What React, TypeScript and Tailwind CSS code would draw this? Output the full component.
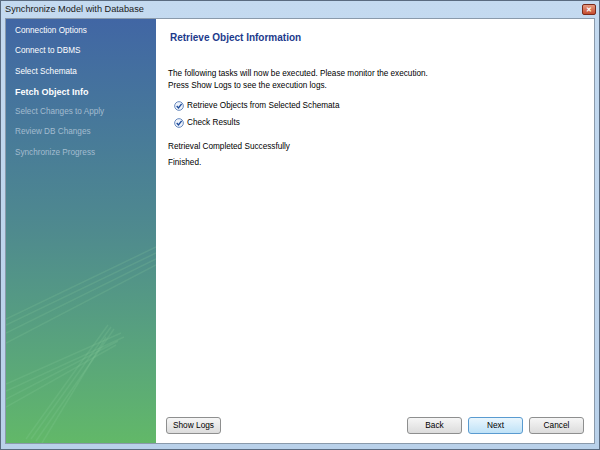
import React from "react";

const steps = [
  { label: "Connection Options", state: "done" },
  { label: "Connect to DBMS", state: "done" },
  { label: "Select Schemata", state: "done" },
  { label: "Fetch Object Info", state: "active" },
  { label: "Select Changes to Apply", state: "todo" },
  { label: "Review DB Changes", state: "todo" },
  { label: "Synchronize Progress", state: "todo" },
];

const tasks = ["Retrieve Objects from Selected Schemata", "Check Results"];

const CheckIcon = () => (
  <svg width="10" height="10" viewBox="0 0 11 11">
    <circle cx="5.5" cy="5.5" r="4.8" fill="#eef3fb" stroke="#5b7fb8" strokeWidth="1" />
    <path d="M3 5.6 L4.9 7.6 L8.4 3.2" fill="none" stroke="#1d4a9a" strokeWidth="1.5" />
  </svg>
);

const Button = ({ label, primary }: { label: string; primary?: boolean }) => (
  <button
    className={
      "h-[17px] w-[55px] whitespace-nowrap rounded-[3px] border text-[8.3px] leading-none text-black " +
      (primary
        ? "border-[#5a9bd0] bg-gradient-to-b from-[#eaf6fd] to-[#bfe2f7]"
        : "border-[#8e8f8f] bg-gradient-to-b from-[#f6f6f6] to-[#dcdcdc]")
    }
  >
    {label}
  </button>
);

const Sidebar = () => (
  <div className="relative w-[150px] shrink-0 overflow-hidden bg-gradient-to-b from-[#4166a4] via-[#4f8a8e] to-[#62b868]">
    <svg className="absolute inset-0" width="150" height="426" viewBox="0 0 150 426">
      <g stroke="#8fd3a0" strokeOpacity="0.18" fill="none" strokeWidth="1.5">
        <path d="M0 300 L150 228" />
        <path d="M0 306 L150 234" />
        <path d="M0 314 L150 240" />
        <path d="M0 324 L150 246" />
        <path d="M0 365 L115 314" />
        <path d="M0 372 L118 318" />
        <path d="M0 380 L112 322" />
        <path d="M0 388 L110 326" />
        <path d="M20 420 L102 306" />
        <path d="M25 420 L105 308" />
        <path d="M30 422 L108 310" />
        <path d="M36 424 L100 318" />
      </g>
    </svg>
    <ul className="relative flex flex-col pt-[6px] pl-[9px]">
      {steps.map((s) => (
        <li
          key={s.label}
          className={
            "h-[20.3px] leading-[12px] " +
            (s.state === "active"
              ? "text-[9px] font-bold text-white"
              : s.state === "done"
              ? "text-[8.2px] text-white"
              : "text-[8.2px] text-[#a3bccf]")
          }
        >
          {s.label}
        </li>
      ))}
    </ul>
  </div>
);

export default function App() {
  return (
    <div
      className="flex h-[450px] w-[600px] flex-col border border-[#5a6b80] bg-gradient-to-b from-[#c4daf0] to-[#b9d1ea]"
      style={{ fontFamily: "'Liberation Sans', Arial, sans-serif" }}
    >
      <div className="flex h-[17px] items-center justify-between pl-[4px] pr-[3px]">
        <span className="text-[9.2px] text-[#1a1a1a]">Synchronize Model with Database</span>
        <div className="flex h-[11px] w-[14px] items-center justify-center rounded-[2px] border border-[#7a2a1a] bg-gradient-to-b from-[#e69a80] to-[#c44a2c] text-[7px] font-bold leading-none text-white">
          ✕
        </div>
      </div>
      <div className="mx-[4px] mb-[5px] flex flex-1 border border-[#8a9aab] bg-white">
        <Sidebar />
        <div className="flex flex-1 flex-col pl-[10px] pr-[10px] pt-[11px] pb-[9px]">
          <h1 className="pl-[4px] text-[10px] font-bold text-[#1c3a8c]">Retrieve Object Information</h1>
          <p className="mt-[23px] pl-[2px] text-[8.2px] leading-[12px] text-black">
            The following tasks will now be executed. Please monitor the execution.
            <br />
            Press Show Logs to see the execution logs.
          </p>
          <div className="mt-[8px] flex flex-col gap-[5px] pl-[8px]">
            {tasks.map((t) => (
              <div key={t} className="flex items-center gap-[3px] text-[8.2px] leading-[12px] text-black">
                <CheckIcon />
                <span>{t}</span>
              </div>
            ))}
          </div>
          <p className="mt-[12px] pl-[2px] text-[8.2px] leading-[12px] text-black">Retrieval Completed Successfully</p>
          <p className="mt-[4px] pl-[2px] text-[8.2px] leading-[12px] text-black">Finished.</p>
          <div className="mt-auto flex items-center">
            <Button label="Show Logs" />
            <div className="flex-1" />
            <div className="flex gap-[6px]">
              <Button label="Back" />
              <Button label="Next" primary />
              <Button label="Cancel" />
            </div>
          </div>
        </div>
      </div>
    </div>
  );
}
